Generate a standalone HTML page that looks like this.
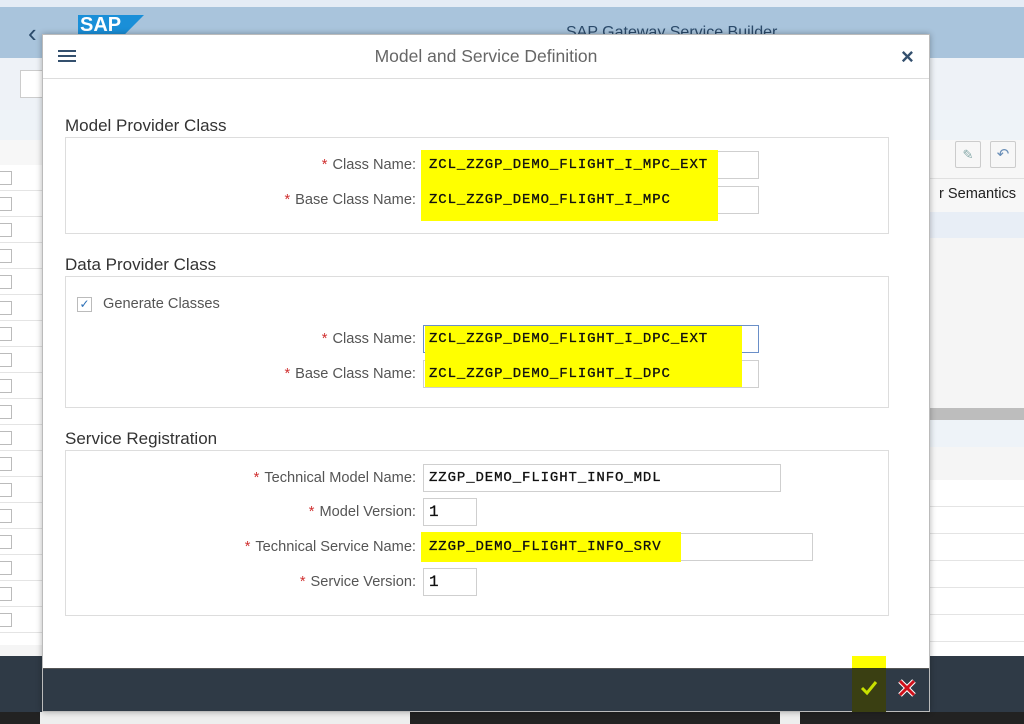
<!DOCTYPE html>
<html><head><meta charset="utf-8"><style>
*{margin:0;padding:0;box-sizing:border-box}
body{width:1024px;height:724px;position:relative;overflow:hidden;background:#f5f5f5;font-family:"Liberation Sans",sans-serif}
.a{position:absolute}
.lbl{position:absolute;right:608px;font-size:14.6px;color:#555;white-space:nowrap}
.lbl b{color:#d03030;font-weight:normal;margin-right:5px}
.inp{position:absolute;left:423px;height:28px;border:1px solid #cfcfcf;background:#fff}
.txt{position:absolute;left:429px;font-family:"Liberation Mono",monospace;font-size:14px;letter-spacing:0.9px;color:#111;white-space:nowrap;-webkit-text-stroke:0.3px #111}
.yl{position:absolute;background:#ffff00}
.sec{position:absolute;left:65px;font-size:17px;color:#333}
.box{position:absolute;left:65px;width:824px;border:1px solid #ddd;background:#fff}
.cb{position:absolute;left:-2px;width:14px;height:14px;border:1px solid #bbb;background:#fff}
</style></head><body>
<div class="a" style="left:0;top:0;width:1024px;height:7px;background:#e5ecf5"></div>
<div class="a" style="left:0;top:7px;width:1024px;height:51px;background:#a9c4dc"></div>
<div class="a" style="left:28px;top:18px;font-size:26px;color:#2b4a6a">‹</div>
<div class="a" style="left:78px;top:15px;width:66px;height:30px;background:#1a8fd8;clip-path:polygon(0 0,100% 0,55% 100%,0 100%)"></div>
<div class="a" style="left:80px;top:14px;font-size:20px;font-weight:bold;color:#fff">SAP</div>
<div class="a" style="left:566px;top:24px;font-size:16px;color:#2b4a6a">SAP Gateway Service Builder</div>
<div class="a" style="left:0;top:58px;width:1024px;height:52px;background:#eef2f7"></div>
<div class="a" style="left:20px;top:70px;width:30px;height:28px;background:#fff;border:1px solid #ccc"></div>
<div class="a" style="left:0;top:110px;width:1024px;height:30px;background:#eef3f8"></div>
<div class="a" style="left:0;top:140px;width:1024px;height:38px;background:#f7f7f7"></div>
<div class="a" style="left:955px;top:141px;width:26px;height:27px;border:1px solid #ccc;border-radius:2px;background:#f7f7f7;color:#8aa;font-size:13px;text-align:center;line-height:25px">✎</div>
<div class="a" style="left:990px;top:141px;width:26px;height:27px;border:1px solid #ccc;border-radius:2px;background:#f7f7f7;color:#6a8fb8;font-size:15px;text-align:center;line-height:25px">↶</div>
<div class="a" style="left:0;top:178px;width:1024px;height:34px;background:#f7f7f7;border-top:1px solid #e0e0e0"></div>
<div class="a" style="left:939px;top:186px;font-size:14.6px;color:#222">r Semantics</div>
<div class="a" style="left:0;top:212px;width:1024px;height:26px;background:#e8eef6"></div>
<div class="a" style="left:0;top:408px;width:1024px;height:12px;background:#bdbdbd"></div>
<div class="a" style="left:0;top:420px;width:1024px;height:27px;background:#eef3f8"></div>
<div class="a" style="left:930px;top:480px;width:94px;height:176px;background:#fff;background-image:repeating-linear-gradient(#fff 0,#fff 26px,#e4e4e4 26px,#e4e4e4 27px)"></div>
<div class="a" style="left:0;top:165px;width:42px;height:480px;background:#fff;background-image:repeating-linear-gradient(#fff 0,#fff 25px,#e4e4e4 25px,#e4e4e4 26px)">
<div class="cb" style="top:6px"></div><div class="cb" style="top:32px"></div><div class="cb" style="top:58px"></div><div class="cb" style="top:84px"></div><div class="cb" style="top:110px"></div><div class="cb" style="top:136px"></div><div class="cb" style="top:162px"></div><div class="cb" style="top:188px"></div><div class="cb" style="top:214px"></div><div class="cb" style="top:240px"></div><div class="cb" style="top:266px"></div><div class="cb" style="top:292px"></div><div class="cb" style="top:318px"></div><div class="cb" style="top:344px"></div><div class="cb" style="top:370px"></div><div class="cb" style="top:396px"></div><div class="cb" style="top:422px"></div><div class="cb" style="top:448px"></div>
</div>
<div class="a" style="left:0;top:656px;width:1024px;height:56px;background:#2f3a46"></div>
<div class="a" style="left:0;top:712px;width:1024px;height:12px;background:#222"></div>
<div class="a" style="left:40px;top:712px;width:370px;height:12px;background:#eee"></div>
<div class="a" style="left:780px;top:712px;width:20px;height:12px;background:#eee"></div>
<div class="a" style="left:42px;top:34px;width:888px;height:678px;background:#fff;border:1px solid #bbb;box-shadow:0 0 6px rgba(0,0,0,.3)"></div>
<div class="a" style="left:43px;top:78px;width:886px;height:1px;background:#ddd"></div>
<div class="a" style="left:58px;top:50px;width:18px;height:2px;background:#34506e;box-shadow:0 5px 0 #34506e,0 10px 0 #34506e"></div>
<div class="a" style="left:0;width:972px;top:46px;text-align:center;font-size:17.5px;color:#666">Model and Service Definition</div>
<div class="a" style="left:901px;top:44px;font-size:22px;color:#34506e;font-weight:bold">×</div>

<div class="sec" style="top:116px">Model Provider Class</div>
<div class="box" style="top:137px;height:97px"></div>
<div class="lbl" style="top:157px"><b>*</b>Class Name:</div>
<div class="inp" style="top:151px;width:336px"></div>
<div class="lbl" style="top:192px"><b>*</b>Base Class Name:</div>
<div class="inp" style="top:186px;width:336px"></div>
<div class="yl" style="left:421px;top:150px;width:297px;height:71px"></div>
<div class="txt" style="top:157px">ZCL_ZZGP_DEMO_FLIGHT_I_MPC_EXT</div>
<div class="txt" style="top:192px">ZCL_ZZGP_DEMO_FLIGHT_I_MPC</div>

<div class="sec" style="top:255px">Data Provider Class</div>
<div class="box" style="top:276px;height:132px"></div>
<div class="a" style="left:77px;top:297px;width:15px;height:15px;border:1px solid #bbb;color:#2b6fb6;font-size:12px;line-height:13px;text-align:center">✓</div>
<div class="a" style="left:103px;top:296px;font-size:14.6px;color:#555">Generate Classes</div>
<div class="lbl" style="top:331px"><b>*</b>Class Name:</div>
<div class="inp" style="top:325px;width:336px;border-color:#6a8fc8"></div>
<div class="lbl" style="top:366px"><b>*</b>Base Class Name:</div>
<div class="inp" style="top:360px;width:336px"></div>
<div class="yl" style="left:425px;top:326px;width:317px;height:61px"></div>
<div class="txt" style="top:331px">ZCL_ZZGP_DEMO_FLIGHT_I_DPC_EXT</div>
<div class="txt" style="top:366px">ZCL_ZZGP_DEMO_FLIGHT_I_DPC</div>

<div class="sec" style="top:429px">Service Registration</div>
<div class="box" style="top:450px;height:166px"></div>
<div class="lbl" style="top:470px"><b>*</b>Technical Model Name:</div>
<div class="inp" style="top:464px;width:358px"></div>
<div class="txt" style="top:470px">ZZGP_DEMO_FLIGHT_INFO_MDL</div>
<div class="lbl" style="top:504px"><b>*</b>Model Version:</div>
<div class="inp" style="top:498px;width:54px"></div>
<div class="txt" style="top:503px;font-size:16px">1</div>
<div class="lbl" style="top:539px"><b>*</b>Technical Service Name:</div>
<div class="inp" style="top:533px;width:390px"></div>
<div class="yl" style="left:421px;top:532px;width:260px;height:30px"></div>
<div class="txt" style="top:539px">ZZGP_DEMO_FLIGHT_INFO_SRV</div>
<div class="lbl" style="top:574px"><b>*</b>Service Version:</div>
<div class="inp" style="top:568px;width:54px"></div>
<div class="txt" style="top:573px;font-size:16px">1</div>

<div class="a" style="left:43px;top:668px;width:886px;height:43px;background:#2f3a46;border-top:1px solid #555"></div>
<div class="yl" style="left:852px;top:656px;width:34px;height:12px"></div>
<div class="a" style="left:852px;top:668px;width:34px;height:44px;background:#3a3f12"></div>
<svg class="a" style="left:859px;top:678px" width="20" height="20" viewBox="0 0 20 20"><path d="M3 10 L8 15 L17 4" fill="none" stroke="#c8e000" stroke-width="3"/></svg>
<svg class="a" style="left:897px;top:678px" width="20" height="20" viewBox="0 0 20 20"><path d="M3 3 L17 17 M17 3 L3 17" stroke="#fff" stroke-width="5"/><path d="M3 3 L17 17 M17 3 L3 17" stroke="#d0101a" stroke-width="3"/></svg>
</body></html>
